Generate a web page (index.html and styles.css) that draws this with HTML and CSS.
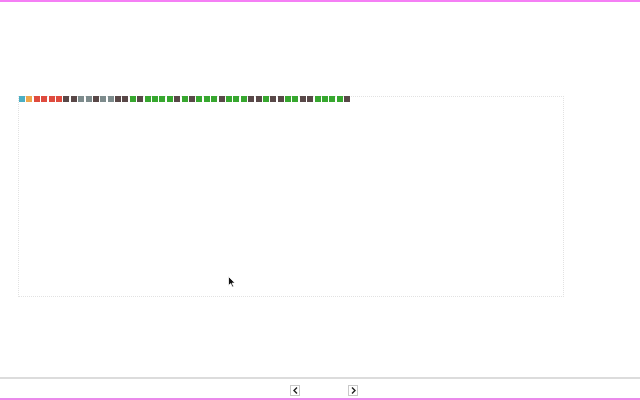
FILE: index.html
```html
<!DOCTYPE html>
<html lang="en">
<head>
    <meta charset="UTF-8">
    <meta name="viewport" content="width=device-width, initial-scale=1.0">
    <title>Timeline</title>
    <link rel="stylesheet" href="styles.css">
</head>
<body>
    <div class="top-line"></div>

    <div class="stage">
        <div class="board">
            <div class="chips">
                <span class="chip teal"></span>
                <span class="chip orange"></span>
                <span class="chip red"></span>
                <span class="chip red"></span>
                <span class="chip red"></span>
                <span class="chip red"></span>
                <span class="chip dark"></span>
                <span class="chip dark"></span>
                <span class="chip gray"></span>
                <span class="chip gray"></span>
                <span class="chip dark"></span>
                <span class="chip gray"></span>
                <span class="chip gray"></span>
                <span class="chip dark"></span>
                <span class="chip dark"></span>
                <span class="chip green"></span>
                <span class="chip dark"></span>
                <span class="chip green"></span>
                <span class="chip green"></span>
                <span class="chip green"></span>
                <span class="chip green"></span>
                <span class="chip dark"></span>
                <span class="chip green"></span>
                <span class="chip dark"></span>
                <span class="chip green"></span>
                <span class="chip green"></span>
                <span class="chip green"></span>
                <span class="chip dark"></span>
                <span class="chip green"></span>
                <span class="chip green"></span>
                <span class="chip green"></span>
                <span class="chip dark"></span>
                <span class="chip dark"></span>
                <span class="chip green"></span>
                <span class="chip dark"></span>
                <span class="chip dark"></span>
                <span class="chip green"></span>
                <span class="chip green"></span>
                <span class="chip dark"></span>
                <span class="chip dark"></span>
                <span class="chip green"></span>
                <span class="chip green"></span>
                <span class="chip green"></span>
                <span class="chip green"></span>
                <span class="chip dark"></span>
            </div>

            <!-- puntero del raton -->
            <svg class="cursor" width="8" height="12" viewBox="0 0 8 12">
                <path d="M0.5 0.5 L0.5 9.5 L2.7 7.6 L4.2 11 L5.6 10.4 L4.1 7.1 L7 7.1 Z" fill="#111" stroke="#fff" stroke-width="0.8"/>
            </svg>
        </div>
    </div>

    <div class="footer">
        <div class="pager">
            <button class="nav-btn">
                <svg width="5" height="7" viewBox="0 0 5 7"><path d="M4 0.5 L1 3.5 L4 6.5" fill="none" stroke="#222" stroke-width="1.4"/></svg>
            </button>
            <button class="nav-btn">
                <svg width="5" height="7" viewBox="0 0 5 7"><path d="M1 0.5 L4 3.5 L1 6.5" fill="none" stroke="#222" stroke-width="1.4"/></svg>
            </button>
        </div>
        <div class="bottom-line"></div>
    </div>
</body>
</html>
```

FILE: styles.css
```css
/* Estilos generales */
html, body {
    height: 100%;
}

body {
    margin: 0;
    font-family: "Liberation Sans", Arial, sans-serif;
    background-color: #fff;
    display: flex;
    flex-direction: column;
    overflow: hidden;
}

.top-line {
    height: 2px;
    background-color: #f57ff5;
}

/* Zona principal */
.stage {
    flex: 1;
    padding-top: 94px;
    padding-left: 18px;
}

.board {
    position: relative;
    width: 544px;
    height: 199px;
    border: 1px dotted #e2e2e2;
}

.chips {
    display: flex;
    gap: 1.4px;
    margin-top: -1px;
}

.chip {
    width: 6px;
    height: 6px;
    flex: none;
}

.teal { background-color: #4bafc4; }
.orange { background-color: #efa74c; }
.red { background-color: #df4b3e; }
.dark { background-color: #594848; }
.gray { background-color: #7d8b8c; }
.green { background-color: #37a72f; }

.cursor {
    position: absolute;
    left: 209px;
    top: 179px;
}

/* Pie */
.footer {
    height: 21px;
    border-top: 2px solid #dcdcdc;
    display: flex;
    flex-direction: column;
}

.pager {
    flex: 1;
    display: flex;
    justify-content: center;
    align-items: center;
    gap: 48px;
    padding-left: 8px;
    padding-top: 3px;
}

.nav-btn {
    width: 10px;
    height: 11px;
    padding: 0;
    border: 1px solid #c8c8c8;
    background-color: #fff;
    display: flex;
    align-items: center;
    justify-content: center;
    cursor: pointer;
}

.bottom-line {
    height: 2px;
    background-color: #ea8aea;
}
```
